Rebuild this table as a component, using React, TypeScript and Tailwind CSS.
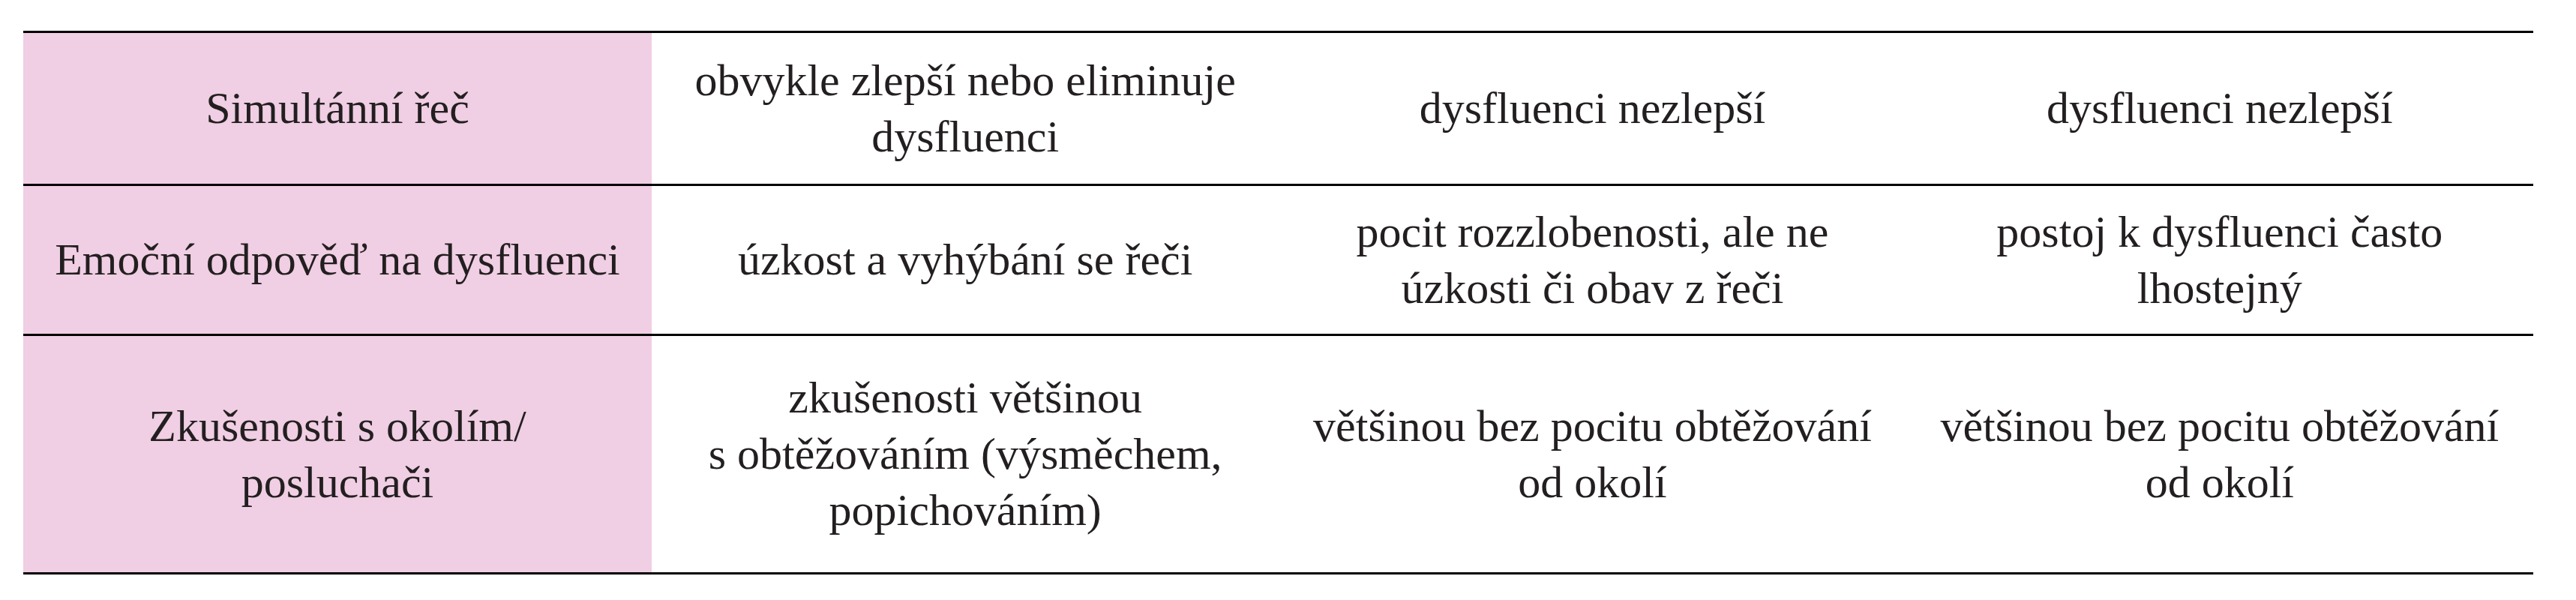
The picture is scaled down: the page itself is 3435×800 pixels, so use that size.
import React from "react";

type Row = { h: string; cells: string[][] };

const rows: Row[] = [
  {
    h: "h-[204px]",
    cells: [
      ["Simultánní řeč"],
      ["obvykle zlepší nebo eliminuje", "dysfluenci"],
      ["dysfluenci nezlepší"],
      ["dysfluenci nezlepší"],
    ],
  },
  {
    h: "h-[200px]",
    cells: [
      ["Emoční odpověď na dysfluenci"],
      ["úzkost a vyhýbání se řeči"],
      ["pocit rozzlobenosti, ale ne", "úzkosti či obav z řeči"],
      ["postoj k dysfluenci často", "lhostejný"],
    ],
  },
  {
    h: "h-[318px]",
    cells: [
      ["Zkušenosti s okolím/", "posluchači"],
      ["zkušenosti většinou", "s obtěžováním (výsměchem,", "popichováním)"],
      ["většinou bez pocitu obtěžování", "od okolí"],
      ["většinou bez pocitu obtěžování", "od okolí"],
    ],
  },
];

export default function App() {
  return (
    <div
      className="w-[3435px] h-[800px] bg-white pt-[41px] pl-[31px] text-[#231f20]"
      style={{ fontFamily: '"Liberation Serif", "Times New Roman", serif' }}
    >
      <div className="w-[3347px] border-t-[3px] border-black">
        {rows.map((r, i) => (
          <div
            key={i}
            className={`grid grid-cols-[838px_1fr_1fr_1fr] border-b-[3px] border-black ${r.h}`}
          >
            {r.cells.map((c, j) => (
              <div
                key={j}
                className={`flex flex-col items-center justify-center text-center text-[60px] leading-[75px] ${
                  j === 0 ? "bg-[#f0cee3]" : "bg-white"
                }`}
              >
                {c.map((line, k) => (
                  <span key={k} className="whitespace-nowrap">
                    {line}
                  </span>
                ))}
              </div>
            ))}
          </div>
        ))}
      </div>
    </div>
  );
}
